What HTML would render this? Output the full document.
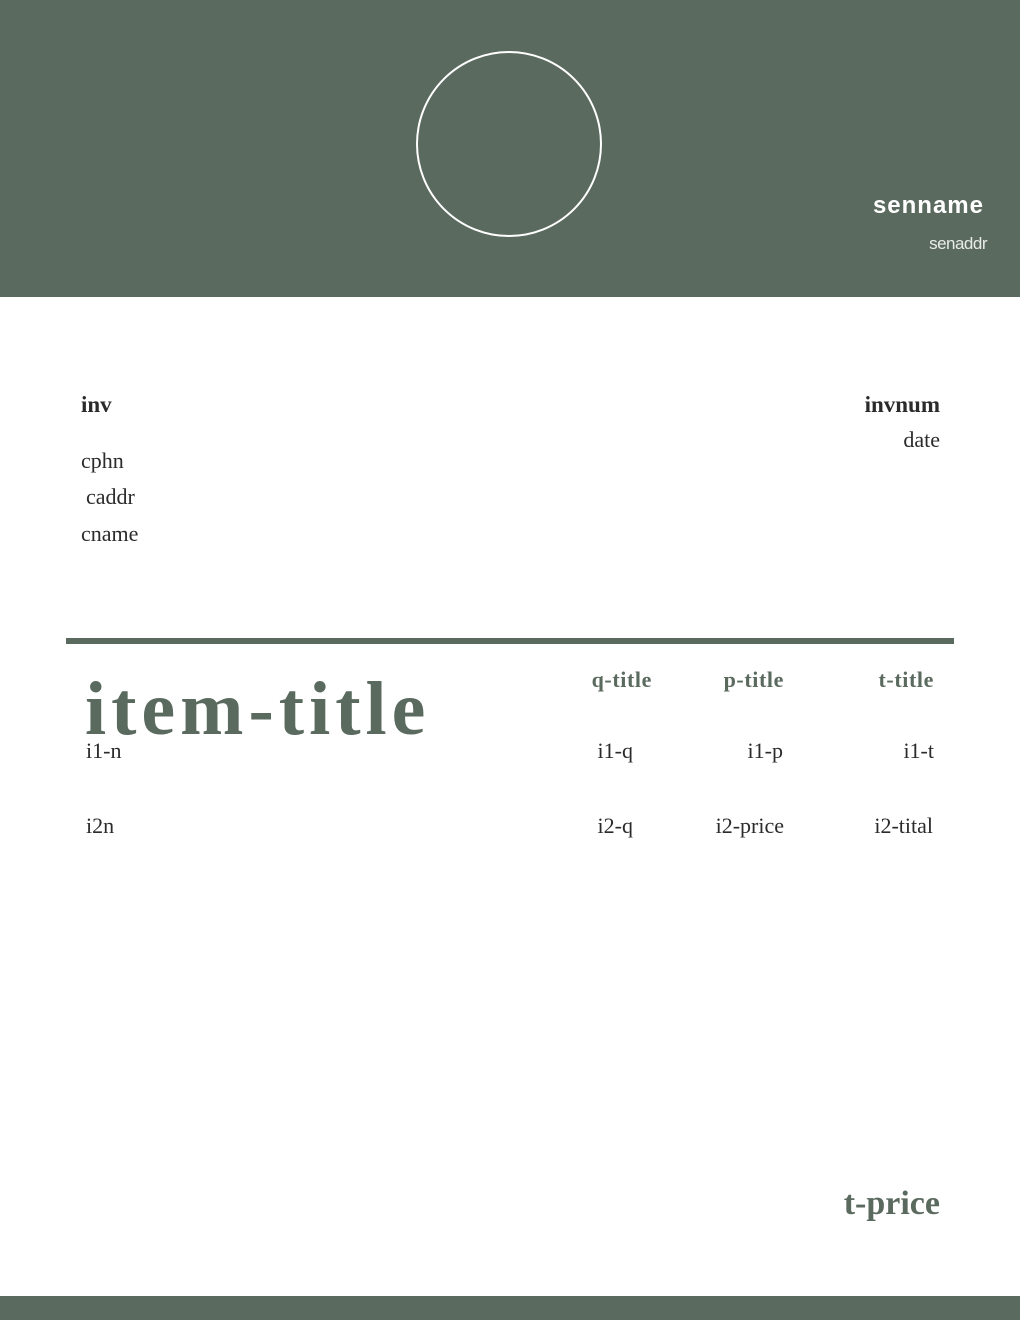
<!DOCTYPE html>
<html><head><meta charset="utf-8"><style>
*{margin:0;padding:0;box-sizing:border-box}
body{width:1020px;height:1320px;position:relative;background:#fff;overflow:hidden;font-family:"Liberation Serif",serif;color:#2b2b2b}
.a{position:absolute;line-height:1;white-space:nowrap}
.r{text-align:right}
.g{color:#5b6a5f}
</style></head><body>
<div class="a" style="left:0;top:0;width:1020px;height:297px;background:#5b6a5f"></div>
<svg class="a" style="left:415px;top:50px" width="188" height="188"><circle cx="94" cy="94" r="92" fill="none" stroke="#fff" stroke-width="2"/></svg>
<div class="a r" style="right:36px;top:194px;font-family:'Liberation Sans',sans-serif;font-weight:bold;font-size:24px;color:#fff;letter-spacing:1px">senname</div>
<div class="a r" style="right:33px;top:235px;font-family:'Liberation Sans',sans-serif;font-size:17px;color:#e8ece9;letter-spacing:-0.5px">senaddr</div>

<div class="a" style="left:81px;top:393px;font-size:23px;font-weight:bold">inv</div>
<div class="a r" style="right:80px;top:393px;font-size:23px;font-weight:bold">invnum</div>
<div class="a r" style="right:80px;top:429px;font-size:22px">date</div>
<div class="a" style="left:81px;top:450px;font-size:22px">cphn</div>
<div class="a" style="left:86px;top:486px;font-size:22px">caddr</div>
<div class="a" style="left:81px;top:523px;font-size:22px">cname</div>

<div class="a" style="left:66px;top:638px;width:888px;height:6px;background:#5b6a5f"></div>

<div class="a g" style="left:85px;top:671px;font-size:76px;font-weight:bold;letter-spacing:5px">item-title</div>
<div class="a g r" style="right:368px;top:669px;font-size:22px;font-weight:bold;letter-spacing:0.6px">q-title</div>
<div class="a g r" style="right:236px;top:669px;font-size:22px;font-weight:bold;letter-spacing:0.6px">p-title</div>
<div class="a g r" style="right:86px;top:669px;font-size:22px;font-weight:bold;letter-spacing:0.6px">t-title</div>

<div class="a" style="left:86px;top:740px;font-size:22px">i1-n</div>
<div class="a r" style="right:387px;top:740px;font-size:22px">i1-q</div>
<div class="a r" style="right:237px;top:740px;font-size:22px">i1-p</div>
<div class="a r" style="right:86px;top:740px;font-size:22px">i1-t</div>

<div class="a" style="left:86px;top:815px;font-size:22px">i2n</div>
<div class="a r" style="right:387px;top:815px;font-size:22px">i2-q</div>
<div class="a r" style="right:236px;top:815px;font-size:22px">i2-price</div>
<div class="a r" style="right:87px;top:815px;font-size:22px">i2-tital</div>

<div class="a g r" style="right:80px;top:1187px;font-size:34px;font-weight:bold">t-price</div>

<div class="a" style="left:0;top:1296px;width:1020px;height:24px;background:#5b6a5f"></div>
</body></html>
